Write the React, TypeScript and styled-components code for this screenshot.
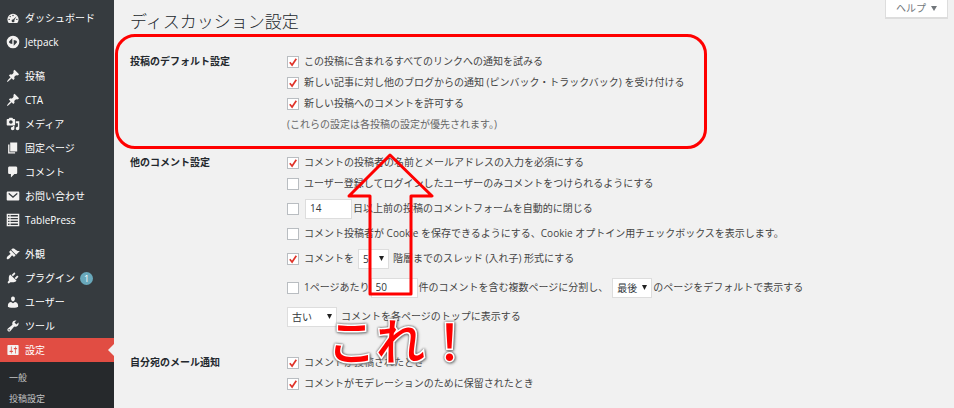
import React from "react";
import styled, { createGlobalStyle, css } from "styled-components";

const GlobalStyle = createGlobalStyle`
  *, *::before, *::after { box-sizing: border-box; }
  body {
    margin: 0;
    background: #f1f1f1;
    color: #444;
    font: 10px/21px "Open Sans", "Noto Sans CJK JP", sans-serif;
  }
`;

const Page = styled.div`
  position: relative;
  display: flex;
  height: 100vh;
  overflow: hidden;
`;

/* ---------- sidebar ---------- */

const Sidebar = styled.nav`
  flex: 0 0 114px;
  display: flex;
  flex-direction: column;
  gap: 10px;
  padding-top: 6px;
  background: #363b3f;
`;

const MenuGroup = styled.ul`
  list-style: none;
  margin: 0;
  padding: 0;
`;

const MenuLink = styled.a<{ $active?: boolean }>`
  position: relative;
  display: flex;
  align-items: center;
  gap: 5px;
  height: 24px;
  padding-left: 6px;
  color: #fff;
  text-decoration: none;
  white-space: nowrap;
  ${(p) =>
    p.$active &&
    css`
      background: #e14d43;
      &::after {
        content: "";
        position: absolute;
        right: 0;
        top: 6px;
        border: 6px solid transparent;
        border-left-width: 0;
        border-right-color: #f1f1f1;
      }
    `}
`;

const MenuIcon = styled.svg`
  flex: none;
  width: 14px;
  height: 14px;
  fill: #f3f2f1;
`;

const Badge = styled.span`
  width: 13px;
  height: 13px;
  border-radius: 50%;
  background: #69a8bb;
  font-size: 9px;
  line-height: 13px;
  text-align: center;
`;

const Submenu = styled.ul`
  list-style: none;
  margin: 0;
  padding: 5px 0 60px 9px;
  background: #26292c;
`;

const SubLink = styled.a`
  display: block;
  color: #c3c4c5;
  font-size: 9px;
  text-decoration: none;
`;

/* ---------- content ---------- */

const Main = styled.main`
  flex: 1;
  min-width: 0;
  padding: 0 6px 0 16px;
`;

const TopBar = styled.header`
  display: flex;
  align-items: flex-start;
  justify-content: space-between;
  height: 51px;
`;

const Title = styled.h1`
  margin: 10px 0 0;
  color: #23282d;
  font-size: 17px;
  font-weight: 300;
  line-height: 24px;
`;

const HelpButton = styled.button`
  display: flex;
  align-items: center;
  gap: 5px;
  height: 19px;
  padding: 0 10px;
  border: 1px solid #ddd;
  border-top: 0;
  border-bottom-width: 2px;
  background: #fff;
  color: #72777c;
  font: inherit;
`;

const SettingsForm = styled.form`
  display: flex;
  flex-direction: column;
  gap: 17px;
`;

const Section = styled.section`
  display: grid;
  grid-template-columns: 157px 1fr;
`;

const SectionTitle = styled.h2`
  margin: 0;
  color: #23282d;
  font-size: 10px;
  font-weight: 700;
`;

const Options = styled.div`
  display: flex;
  flex-direction: column;
  white-space: nowrap;
`;

const Option = styled.div<{ $tall?: boolean; $last?: boolean }>`
  display: flex;
  align-items: center;
  height: ${(p) => (p.$tall ? 29 : 21)}px;
  margin-bottom: ${(p) => (p.$last ? 4 : 0)}px;
`;

const Note = styled.p`
  margin: 0;
  color: #666;
`;

const Check = styled.input.attrs({ type: "checkbox" })`
  appearance: none;
  flex: none;
  width: 12px;
  height: 12px;
  margin: 0 5px 0 0;
  border: 1px solid #b9bdc1;
  background: #fff center / 10px 10px no-repeat;
  &:checked {
    background-image: url("data:image/svg+xml,%3Csvg xmlns='http://www.w3.org/2000/svg' viewBox='0 0 10 10'%3E%3Cpath d='M1.8 5.2l2.3 2.8L8.3 1.7' fill='none' stroke='%23e0342a' stroke-width='1.7'/%3E%3C/svg%3E");
  }
`;

const field = css`
  height: 20px;
  border: 1px solid #ddd;
  border-radius: 0;
  background-color: #fff;
  color: #32373c;
  font: inherit;
`;

const NumberField = styled.input`
  ${field}
  width: 47px;
  margin: 0 1px;
  padding: 0 4px;
`;

const SelectField = styled.select<{ $width: number; $gap: number }>`
  ${field}
  appearance: none;
  width: ${(p) => p.$width}px;
  margin: 0 ${(p) => p.$gap}px 0 0;
  padding: 0 4px;
  line-height: 18px;
  background-image: url("data:image/svg+xml,%3Csvg xmlns='http://www.w3.org/2000/svg' viewBox='0 0 5 5'%3E%3Cpath d='M0 0h5L2.5 5z' fill='%23222'/%3E%3C/svg%3E");
  background-repeat: no-repeat;
  background-position: right 4px center;
  background-size: 5px 5px;
`;

const Before = styled.label`
  margin-right: 4px;
`;

/* ---------- annotations ---------- */

const HighlightBox = styled.div`
  position: absolute;
  left: 115px;
  top: 34px;
  width: 592px;
  height: 115px;
  border: 3px solid #f00;
  border-radius: 20px;
  pointer-events: none;
`;

const PointerArrow = styled.svg`
  position: absolute;
  left: 345px;
  top: 151px;
  width: 90px;
  height: 146px;
  fill: none;
  stroke: #f00;
  stroke-width: 3;
  stroke-linejoin: round;
  pointer-events: none;
`;

const Callout = styled.strong`
  position: absolute;
  left: 327px;
  top: 309px;
  color: #f00;
  font: 500 49px/60px "Noto Sans CJK JP", sans-serif;
  white-space: nowrap;
  -webkit-text-stroke: 3px #fff;
  paint-order: stroke fill;
  filter: drop-shadow(0 0 1px #555) drop-shadow(1px 1px 1px #999);
  pointer-events: none;
`;

const icons = {
  dashboard:
    "M3.8 17h12.4A8 8 0 1 0 3.8 17zM10 5.500a1 1 0 1 1 0 2 1 1 0 0 1 0-2zM6 7a1 1 0 1 1 0 2 1 1 0 0 1 0-2zM15 7.500l-3.200 5.600a2 2 0 1 1-1.600-1zM4.500 11a1 1 0 1 1 0 2 1 1 0 0 1 0-2zM15.500 11a1 1 0 1 1 0 2 1 1 0 0 1 0-2z",
  jetpack:
    "M10 1a9 9 0 1 0 0 18 9 9 0 0 0 0-18zM9 4.500v8.300L6.200 12c-1.700-.4-2.300-1.600-1.500-3zM11 15.500V7.200l2.800.8c1.700.4 2.300 1.600 1.500 3z",
  pin: "M10.44 3.02l1.82-1.82 6.36 6.35-1.83 1.82c-1.05-.68-2.48-.57-3.41.36l-.75.75c-.92.93-1.04 2.35-.35 3.41l-1.83 1.82-2.41-2.41-2.8 2.79c-.42.42-3.38 2.71-3.8 2.29s1.86-3.39 2.28-3.81l2.79-2.79L4.1 9.36l1.83-1.82c1.05.69 2.48.57 3.4-.36l.75-.75c.93-.92 1.05-2.35.36-3.41z",
  media:
    "M13 11V4c0-.55-.45-1-1-1h-1.67L9 1H5L3.67 3H2c-.55 0-1 .45-1 1v7c0 .55.45 1 1 1h10c.55 0 1-.45 1-1zM7 4.5c1.38 0 2.5 1.12 2.5 2.5S8.38 9.500 7 9.500 4.500 8.380 4.500 7 5.620 4.500 7 4.500zM14 6h5v10.500c0 1.380-1.120 2.500-2.500 2.500S14 17.880 14 16.500s1.120-2.500 2.500-2.500c.17 0 .34.02.5.05V9h-3V6zm-4 8.050V13h2v3.500c0 1.380-1.120 2.500-2.500 2.500S7 17.880 7 16.500 8.120 14 9.500 14c.17 0 .34.02.5.05z",
  page: "M6 15V2h10v13H6zm-1 1h8v2H3V5h2v11z",
  comment:
    "M5 2h9c1.1 0 2 .9 2 2v7c0 1.1-.9 2-2 2h-2l-5 5v-5H5c-1.1 0-2-.9-2-2V4c0-1.1.9-2 2-2z",
  mail: "M2.500 3.500h15c.8 0 1.500.7 1.500 1.500v10c0 .8-.7 1.500-1.500 1.500h-15C1.700 16.500 1 15.800 1 15V5c0-.8.7-1.500 1.500-1.500zM4.200 5.500L3.500 7l6.500 6 6.500-6-.7-1.500L10 10.500z",
  table:
    "M1 1h18v18H1zM3 3v2h2V3zM6.500 3v2H17V3zM3 7v2h2V7zM6.500 7v2H17V7zM3 11v2h2v-2zM6.500 11v2H17v-2zM3 15v2h2v-2zM6.500 15v2H17v-2z",
  brush:
    "M14.48 11.06L7.41 3.99l1.5-1.5c.5-.56 2.3-.47 3.51.32 1.21.8 1.43 1.28 2.91 2.1 1.18.64 2.45 1.26 4.45.85zm-.71.71L6.7 4.7 4.93 6.47c-.39.39-.39 1.02 0 1.41l1.06 1.06c.39.39.39 1.03 0 1.42-.6.6-1.43 1.11-2.21 1.69-.35.26-.7.53-1.01.84C1.43 14.23.4 16.08 1.4 17.07c.99 1 2.84-.03 4.18-1.36.31-.31.58-.66.85-1.02.57-.78 1.08-1.61 1.69-2.21.39-.39 1.02-.39 1.41 0l1.06 1.06c.39.39 1.02.39 1.41 0z",
  plug: "M13.11 4.36L9.87 7.6 8 5.73l3.24-3.24c.35-.34 1.05-.2 1.56.32.52.51.66 1.21.31 1.55zm-8 1.77l.91-1.12 9.01 9.01-1.19.84c-.71.71-2.63 1.16-3.82 1.16H6.14L4.9 17.26c-.59.59-1.54.59-2.12 0-.59-.58-.59-1.53 0-2.12l1.24-1.24v-3.88c0-1.13.4-3.19 1.09-3.89zm7.26 3.97l3.24-3.24c.34-.35 1.04-.21 1.55.31.52.51.66 1.21.31 1.55l-3.24 3.25z",
  user: "M10 9.25c-2.27 0-2.73-3.44-2.73-3.44C7 4.02 7.82 2 9.97 2c2.16 0 2.98 2.02 2.71 3.81 0 0-.41 3.44-2.68 3.44zm0 2.57L12.72 10c2.39 0 4.52 2.33 4.52 4.53v2.49s-3.65 1.13-7.24 1.13c-3.65 0-7.24-1.13-7.24-1.13v-2.49c0-2.25 1.94-4.48 4.47-4.48z",
  wrench:
    "M16.68 9.77c-1.34 1.34-3.3 1.67-4.95.99l-5.41 6.52c-.99.99-2.59.99-3.58 0s-.99-2.59 0-3.57l6.52-5.42c-.68-1.65-.35-3.61.99-4.95 1.28-1.28 3.12-1.62 4.72-1.06l-2.89 2.89 2.82 2.82 2.86-2.87c.53 1.58.18 3.39-1.08 4.65zM3.81 16.21c.4.39 1.04.39 1.43 0 .4-.4.4-1.04 0-1.43-.39-.4-1.03-.4-1.43 0-.39.39-.39 1.03 0 1.43z",
  settings:
    "M18 16V4c0-.55-.45-1-1-1H3c-.55 0-1 .45-1 1v12c0 .55.45 1 1 1h14c.55 0 1-.45 1-1zM8 11h1c.55 0 1 .45 1 1s-.45 1-1 1H8v1.5c0 .28-.22.5-.5.5s-.5-.22-.5-.5V13H6c-.55 0-1-.45-1-1s.45-1 1-1h1V5.500c0-.28.22-.5.5-.5s.5.22.5.5V11zm5-2h-1c-.55 0-1-.45-1-1s.45-1 1-1h1V5.500c0-.28.22-.5.5-.5s.5.22.5.5V7h1c.55 0 1 .45 1 1s-.45 1-1 1h-1v5.500c0 .28-.22.5-.5.5s-.5-.22-.5-.5V9z",
};

type Item = { icon: keyof typeof icons; label: string; badge?: number; active?: boolean };

const menu: Item[][] = [
  [
    { icon: "dashboard", label: "ダッシュボード" },
    { icon: "jetpack", label: "Jetpack" },
  ],
  [
    { icon: "pin", label: "投稿" },
    { icon: "pin", label: "CTA" },
    { icon: "media", label: "メディア" },
    { icon: "page", label: "固定ページ" },
    { icon: "comment", label: "コメント" },
    { icon: "mail", label: "お問い合わせ" },
    { icon: "table", label: "TablePress" },
  ],
  [
    { icon: "brush", label: "外観" },
    { icon: "plug", label: "プラグイン", badge: 1 },
    { icon: "user", label: "ユーザー" },
    { icon: "wrench", label: "ツール" },
    { icon: "settings", label: "設定", active: true },
  ],
];

function CheckOption({ id, label, checked }: { id: string; label: string; checked?: boolean }) {
  return (
    <Option>
      <Check id={id} defaultChecked={checked} />
      <label htmlFor={id}>{label}</label>
    </Option>
  );
}

export default function App() {
  return (
    <>
      <GlobalStyle />
      <Page lang="ja">
        <Sidebar>
          {menu.map((group, i) => (
            <MenuGroup key={i}>
              {group.map((item) => (
                <li key={item.label}>
                  <MenuLink href="#" $active={item.active}>
                    <MenuIcon viewBox="0 0 20 20" fillRule="evenodd" aria-hidden="true">
                      <path d={icons[item.icon]} />
                    </MenuIcon>
                    {item.label}
                    {item.badge && <Badge>{item.badge}</Badge>}
                  </MenuLink>
                  {item.active && (
                    <Submenu>
                      <li><SubLink href="#">一般</SubLink></li>
                      <li><SubLink href="#">投稿設定</SubLink></li>
                    </Submenu>
                  )}
                </li>
              ))}
            </MenuGroup>
          ))}
        </Sidebar>

        <Main>
          <TopBar>
            <Title>ディスカッション設定</Title>
            <HelpButton type="button">
              ヘルプ
              <svg width="6" height="5" viewBox="0 0 6 5" fill="currentColor" aria-hidden="true">
                <path d="M0 0h6L3 5z" />
              </svg>
            </HelpButton>
          </TopBar>

          <SettingsForm>
            <Section>
              <SectionTitle>投稿のデフォルト設定</SectionTitle>
              <Options>
                <CheckOption id="pingback-out" checked label="この投稿に含まれるすべてのリンクへの通知を試みる" />
                <CheckOption id="pingback-in" checked label="新しい記事に対し他のブログからの通知 (ピンバック・トラックバック) を受け付ける" />
                <CheckOption id="allow-comments" checked label="新しい投稿へのコメントを許可する" />
                <Note>(これらの設定は各投稿の設定が優先されます。)</Note>
              </Options>
            </Section>

            <Section>
              <SectionTitle>他のコメント設定</SectionTitle>
              <Options>
                <CheckOption id="require-name" checked label="コメントの投稿者の名前とメールアドレスの入力を必須にする" />
                <CheckOption id="registration" label="ユーザー登録してログインしたユーザーのみコメントをつけられるようにする" />
                <Option $tall>
                  <Check id="close-old" aria-label="自動的に閉じる" />
                  <NumberField id="close-days" defaultValue="14" />
                  <label htmlFor="close-days">日以上前の投稿のコメントフォームを自動的に閉じる</label>
                </Option>
                <CheckOption id="cookies" label="コメント投稿者が Cookie を保存できるようにする、Cookie オプトイン用チェックボックスを表示します。" />
                <Option $tall>
                  <Check id="thread" defaultChecked />
                  <Before htmlFor="thread">コメントを</Before>
                  <SelectField id="depth" $width={31} $gap={4} defaultValue="5">
                    <option>5</option>
                  </SelectField>
                  <label htmlFor="depth">階層までのスレッド (入れ子) 形式にする</label>
                </Option>
                <Option $tall>
                  <Check id="paginate" />
                  <label htmlFor="paginate">1ページあたり</label>
                  <NumberField id="per-page" defaultValue="50" />
                  <Before htmlFor="per-page">件のコメントを含む複数ページに分割し、</Before>
                  <SelectField id="default-page" $width={40} $gap={1} defaultValue="最後">
                    <option>最後</option>
                  </SelectField>
                  <label htmlFor="default-page">のページをデフォルトで表示する</label>
                </Option>
                <Option $tall $last>
                  <SelectField id="order" $width={50} $gap={4} defaultValue="古い">
                    <option>古い</option>
                  </SelectField>
                  <label htmlFor="order">コメントを各ページのトップに表示する</label>
                </Option>
              </Options>
            </Section>

            <Section>
              <SectionTitle>自分宛のメール通知</SectionTitle>
              <Options>
                <CheckOption id="mail-posted" checked label="コメントが投稿されたとき" />
                <CheckOption id="mail-held" checked label="コメントがモデレーションのために保留されたとき" />
              </Options>
            </Section>
          </SettingsForm>
        </Main>

        <HighlightBox />
        <PointerArrow viewBox="0 0 90 146" aria-hidden="true">
          <path d="M45 4L87 45H66v98H25V45H4z" />
        </PointerArrow>
        <Callout>これ！</Callout>
      </Page>
    </>
  );
}
